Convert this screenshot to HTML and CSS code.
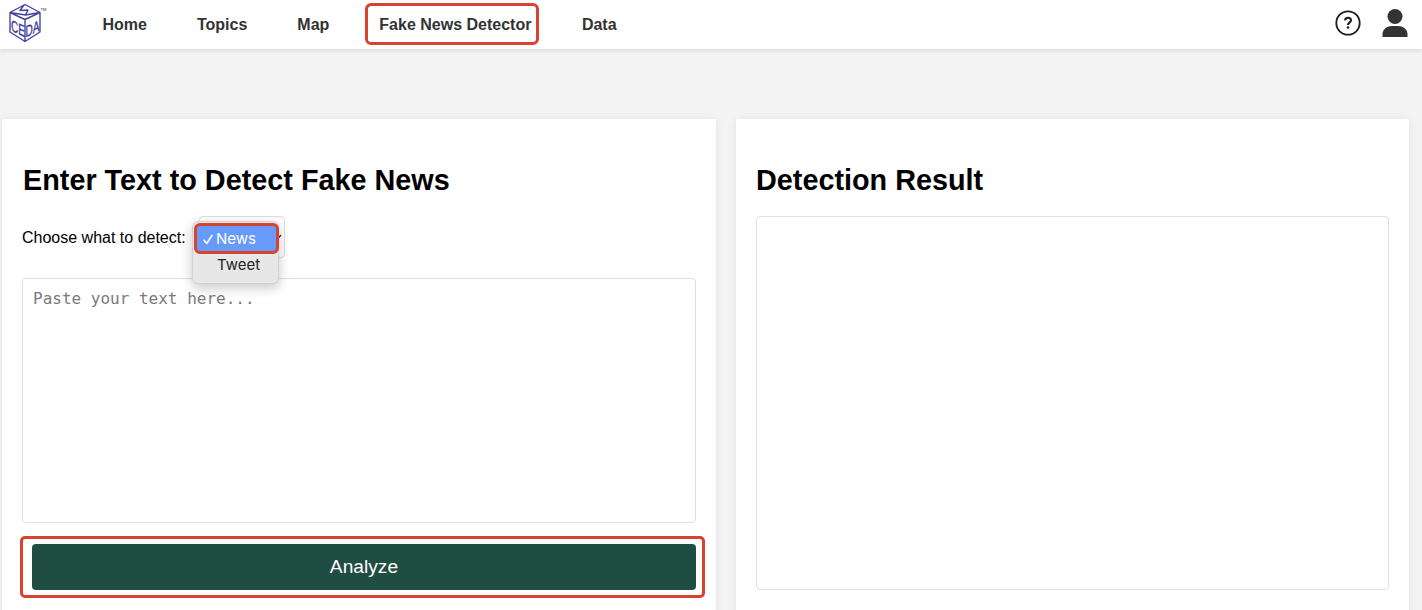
FILE: index.html
```html
<!DOCTYPE html>
<html lang="en">
<head>
<meta charset="utf-8">
<title>Fake News Detector</title>
<link rel="stylesheet" href="styles.css">
</head>
<body>
<header class="topbar">
  <svg class="logo" viewBox="0 0 40 40" fill="none" stroke="#4644a0" stroke-width="1.4" stroke-linejoin="round">
    <path d="M18 1.500 33 9.500V29L18 38.500 3 29V9.500ZM3 9.500 18 16.500 33 9.500M18 16.500V38.500M17 2 13 7.500 21 7 18.500 12 33 9.500M3 9.500 18.500 12"/>
    <text class="mark" transform="matrix(1 .47 0 1 4 27.500)" textLength="14" lengthAdjust="spacingAndGlyphs">CE</text>
    <text class="mark" transform="matrix(1 -.47 0 1 18.500 34.500)" textLength="14" lengthAdjust="spacingAndGlyphs">DA</text>
    <text class="tm" x="33.500" y="8" stroke="none">TM</text>
  </svg>
  <nav class="nav">
    <a class="nav-link">Home</a>
    <a class="nav-link">Topics</a>
    <a class="nav-link">Map</a>
    <a class="nav-link marked">Fake News Detector</a>
    <a class="nav-link">Data</a>
  </nav>
  <svg class="help" viewBox="0 0 26 26" fill="none" stroke="#1c1c1c">
    <circle cx="13" cy="13" r="11.700" stroke-width="1.800"/>
    <path stroke-width="2.100" d="M10 10.300C10.300 7 16 7 16 10.200C16 12.500 13 12.300 13 15"/>
    <circle cx="13" cy="17.600" r="1.250" fill="#1c1c1c" stroke="none"/>
  </svg>
  <svg class="user" viewBox="0 0 26 30" fill="#333">
    <circle cx="13" cy="7.500" r="7.500"/>
    <path d="M.5 28V25.500C.5 20 5 17 10 17H16C21 17 25.500 20 25.500 25.500V28Z"/>
  </svg>
</header>
<main class="panels">
  <section class="panel input-panel">
    <h2 class="title">Enter Text to Detect Fake News</h2>
    <div class="choice">
      <span class="label">Choose what to detect:</span>
      <div class="select">
        <svg class="chevron" viewBox="0 0 8 6" fill="none" stroke="#333" stroke-width="1.300"><path d="M1 1 4 4.500 7 1"/></svg>
        <div class="menu">
          <div class="option selected"><svg class="check" viewBox="0 0 10 11" fill="none" stroke="#fff" stroke-width="1.600" stroke-linecap="round" stroke-linejoin="round"><path d="M1 6.200 3.700 9.500 9 1.500"/></svg>News</div>
          <div class="option">Tweet</div>
        </div>
      </div>
    </div>
    <textarea class="entry" placeholder="Paste your text here..."></textarea>
    <div class="action"><button class="analyze">Analyze</button></div>
  </section>
  <section class="panel result-panel">
    <h2 class="title">Detection Result</h2>
    <div class="result"></div>
  </section>
</main>
</body>
</html>
```
FILE: styles.css
```css
* { box-sizing: border-box; }
body {
  margin: 0;
  height: 610px;
  overflow: hidden;
  background: #f4f4f4;
  font: 16px "Liberation Sans", Arial, sans-serif;
  color: #000;
}
.topbar {
  display: flex;
  align-items: flex-start;
  height: 49px;
  background: #fff;
  box-shadow: 0 2px 4px rgba(0,0,0,.1);
}
.logo { width: 40px; height: 40px; margin: 3px 0 0 7px; flex: none; }
.mark { font: 16px "Liberation Sans", sans-serif; fill: #38369a; stroke: #38369a; stroke-width: .35; }
.tm { font: bold 4px "Liberation Sans", sans-serif; fill: #777; }
.nav { display: flex; flex: 1; margin: 3px 0 0 41.500px; }
.nav-link {
  height: 42px;
  padding: 0 11px 0 14px;
  margin-right: 25px;
  line-height: 43px;
  font-weight: 700;
  color: #333;
  white-space: nowrap;
}
.marked {
  border: 3px solid #d7432f;
  border-radius: 6px;
  padding: 0 5px 0 11px;
  margin: 0 28.500px 0 0;
  line-height: 37px;
}
.help { width: 26px; height: 26px; margin: 10px 21px 0 0; }
.user { width: 26px; height: 30px; margin: 9px 14px 0 0; }
.panels { display: flex; gap: 20px; padding: 70px 13px 0 2px; }
.panel {
  height: 511px;
  padding: 43px 20px 0;
  background: #fff;
  border-radius: 2px 2px 0 0;
  box-shadow: 0 0 10px rgba(0,0,0,.08);
}
.input-panel { width: 714px; }
.result-panel { width: 673px; }
.title { margin: 0 0 18px; font-size: 28.800px; line-height: 36px; white-space: nowrap; }
.input-panel .title { padding-left: 1px; }
.choice { display: flex; height: 42px; margin-bottom: 20px; }
.label { width: 170px; line-height: 44px; white-space: nowrap; }
.select {
  position: relative;
  width: 86px;
  margin-left: 7px;
  border: 1px solid #ddd;
  border-radius: 4px;
}
.chevron { position: absolute; right: 2px; top: 17px; width: 8px; height: 6px; }
.menu {
  position: absolute;
  z-index: 2;
  left: -8px;
  top: 4px;
  width: 87px;
  height: 63px;
  padding: 1px 0 0 1px;
  border: 1px solid #d2d2d2;
  border-radius: 6px;
  background: #e7e7e7;
  box-shadow: 0 4px 12px rgba(0,0,0,.22);
  font: 15px Inter, sans-serif;
  color: #222;
}
.option { position: relative; padding-left: 23px; line-height: 22px; }
.selected {
  width: 85px;
  height: 31px;
  padding-left: 19px;
  border: 3px solid #d7432f;
  border-radius: 6px;
  line-height: 26px;
  background: #679afa;
  color: #fff;
}
.check { position: absolute; left: 6px; top: 8px; width: 10px; height: 11px; }
.entry {
  display: block;
  width: 674px;
  height: 245px;
  margin: 0;
  padding: 10px;
  resize: none;
  border: 1px solid #e0e0e0;
  border-radius: 4px;
  font: 16px "DejaVu Sans Mono", monospace;
}
.entry::placeholder { color: #7a7a7a; }
.action {
  width: 685px;
  height: 62px;
  margin: 13px 0 0 -2px;
  padding: 5px 6px 5px 9px;
  border: 3px solid #d7432f;
  border-radius: 5px;
}
.analyze {
  display: block;
  width: 100%;
  height: 46px;
  padding: 0;
  border: 0;
  border-radius: 4px;
  background: #1f4d41;
  color: #fff;
  font: 19.200px "Liberation Sans", Arial, sans-serif;
}
.result { height: 374px; border: 1px solid #e0e0e0; border-radius: 4px; }
```
